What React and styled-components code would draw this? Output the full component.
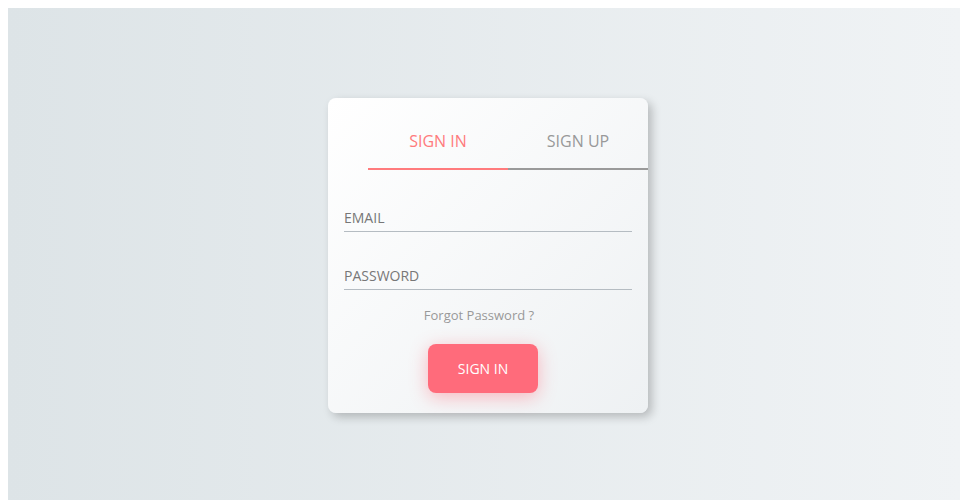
import React, { useState } from 'react'
import styled, { createGlobalStyle } from 'styled-components'

const Global = createGlobalStyle`
body{
    margin: 8px 0 0 8px;
    overflow: hidden;
    font-family: "Open Sans", "Liberation Sans", sans-serif;
}
`

const Page = styled.div`
width: calc(100vw - 8px);
height: calc(100vh - 8px);
background: linear-gradient(to right, #dde4e7 0%, #f0f3f5 100%);
display: flex;
justify-content: center;
align-items: center;
padding-left: 8px;
box-sizing: border-box;
`

const Card = styled.div`
width: 320px;
height: 315px;
box-sizing: border-box;
border-radius: 8px;
background: linear-gradient(135deg, #ffffff 0%, #eef1f3 100%);
box-shadow: 4px 4px 10px rgba(0, 0, 0, 0.22);
display: flex;
flex-direction: column;
margin-top: 3px;
`

const Tabs = styled.div`
display: flex;
padding-left: 40px;
margin-top: 32px;
`

const Tab = styled.button`
flex: 1;
background: none;
border: none;
border-bottom: 2px solid ${p => (p.$active ? '#ff7b7d' : '#9a9a9a')};
color: ${p => (p.$active ? '#ff7b7d' : '#999999')};
font-family: "Open Sans", "Liberation Sans", sans-serif;
font-size: 16px;
padding: 0 0 16px;
line-height: 22px;
cursor: pointer;
`

const Form = styled.div`
display: flex;
flex-direction: column;
padding: 0 16px;
margin-top: 38px;
gap: 34px;
`

const Field = styled.label`
display: block;
border-bottom: 1px solid #b5bcc2;
color: #777777;
font-size: 14px;
line-height: 20px;
padding-bottom: 3px;
`

const Forgot = styled.div`
text-align: center;
color: #999999;
font-size: 13px;
margin-top: 16px;
padding-right: 18px;
`

const Button = styled.button`
align-self: center;
margin: 20px 10px 0 0;
width: 110px;
height: 49px;
border: none;
border-radius: 8px;
background: #ff6b7b;
color: #ffffff;
font-family: "Open Sans", "Liberation Sans", sans-serif;
font-size: 14px;
box-shadow: 0 4px 18px rgba(255, 107, 123, 0.45);
cursor: pointer;
`

export default function App() {
    const [tab, setTab] = useState('in')

    return (
        <>
            <Global />
            <Page>
                <Card>
                    <Tabs>
                        <Tab $active={tab === 'in'} onClick={() => setTab('in')}>SIGN IN</Tab>
                        <Tab $active={tab === 'up'} onClick={() => setTab('up')}>SIGN UP</Tab>
                    </Tabs>
                    <Form>
                        <Field>EMAIL</Field>
                        <Field>PASSWORD</Field>
                    </Form>
                    <Forgot>Forgot Password ?</Forgot>
                    <Button>SIGN IN</Button>
                </Card>
            </Page>
        </>
    )
}
